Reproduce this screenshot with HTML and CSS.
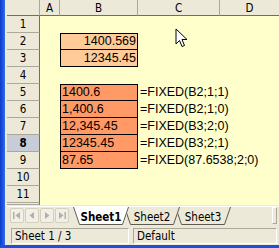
FILE: index.html
```html
<!DOCTYPE html>
<html lang="en">
<head>
    <meta charset="UTF-8">
    <title>FIXED function</title>
    <link rel="stylesheet" href="styles.css">
</head>
<body>
    <div class="window">
        <div class="frame-left"></div>
        <div class="app">
            <div class="sheet">
                <div class="corner"></div>
                <div class="colhead">A</div>
                <div class="colhead">B</div>
                <div class="colhead">C</div>
                <div class="colhead last">D</div>

                <div class="rowhead">1</div><div></div><div></div><div></div><div></div>
                <div class="rowhead">2</div><div></div><div class="cell peach first num">1400.569</div><div></div><div></div>
                <div class="rowhead">3</div><div></div><div class="cell peach num">12345.45</div><div></div><div></div>
                <div class="rowhead">4</div><div></div><div></div><div></div><div></div>
                <div class="rowhead">5</div><div></div><div class="cell orange first">1400.6</div><div class="formula">=FIXED(B2;1;1)</div><div></div>
                <div class="rowhead">6</div><div></div><div class="cell orange">1,400.6</div><div class="formula">=FIXED(B2;1;0)</div><div></div>
                <div class="rowhead">7</div><div></div><div class="cell orange">12,345.45</div><div class="formula">=FIXED(B3;2;0)</div><div></div>
                <div class="rowhead selected">8</div><div></div><div class="cell orange">12345.45</div><div class="formula">=FIXED(B3;2;1)</div><div></div>
                <div class="rowhead">9</div><div></div><div class="cell orange">87.65</div><div class="formula">=FIXED(87.6538;2;0)</div><div></div>
                <div class="rowhead">10</div><div></div><div></div><div></div><div></div>
                <div class="rowhead">11</div><div></div><div></div><div></div><div></div>
                <div class="rowhead"></div><div></div><div></div><div></div><div></div>

                <svg class="cursor" width="13" height="21" viewBox="0 0 13 21">
                    <path d="M1 1 L1 16 L4.5 12.5 L7 18.5 L9.5 17.5 L7 11.5 L12 11.5 Z" fill="#fff" stroke="#000" stroke-width="1" stroke-linejoin="miter"/>
                </svg>
            </div>

            <div class="tabbar">
                <div class="navs">
                    <span class="nav"><svg width="8" height="7" viewBox="0 0 8 7"><rect x="0" y="0" width="1.5" height="7" fill="#b3b0a3"/><path d="M7 0 L2.5 3.5 L7 7 Z" fill="#b3b0a3"/></svg></span>
                    <span class="nav"><svg width="8" height="7" viewBox="0 0 8 7"><path d="M6 0 L1.5 3.5 L6 7 Z" fill="#b3b0a3"/></svg></span>
                    <span class="nav"><svg width="8" height="7" viewBox="0 0 8 7"><path d="M2 0 L6.5 3.5 L2 7 Z" fill="#b3b0a3"/></svg></span>
                    <span class="nav"><svg width="8" height="7" viewBox="0 0 8 7"><path d="M1 0 L5.5 3.5 L1 7 Z" fill="#b3b0a3"/><rect x="6.5" y="0" width="1.5" height="7" fill="#b3b0a3"/></svg></span>
                </div>
                <div class="tabs">
                    <div class="tab active">
                        <svg class="tab-shape" width="56" height="18" viewBox="0 0 56 18"><path d="M0 0 L6 17.5 L50 17.5 L56 0 Z" fill="#fff"/><path d="M0.5 0 L6.5 17.5 L49.5 17.5 L55.5 0" fill="none" stroke="#5d5b52"/></svg>
                        <span>Sheet1</span>
                    </div>
                    <div class="tab second">
                        <svg class="tab-shape" width="56" height="18" viewBox="0 0 56 18"><path d="M0 0 L6 17.5 L50 17.5 L56 0 Z" fill="#ece9d8"/><path d="M0.5 0 L6.5 17.5 L49.5 17.5 L55.5 0" fill="none" stroke="#5d5b52"/></svg>
                        <span>Sheet2</span>
                    </div>
                    <div class="tab third">
                        <svg class="tab-shape" width="56" height="18" viewBox="0 0 56 18"><path d="M0 0 L6 17.5 L50 17.5 L56 0 Z" fill="#ece9d8"/><path d="M0.5 0 L6.5 17.5 L49.5 17.5 L55.5 0" fill="none" stroke="#5d5b52"/></svg>
                        <span>Sheet3</span>
                    </div>
                </div>
                <div class="splitter"></div>
            </div>

            <div class="statusbar">
                <div class="field pages">Sheet 1 / 3</div>
                <div class="field style">Default</div>
            </div>
        </div>
    </div>
    <div class="frame-bottom"></div>
</body>
</html>
```

FILE: styles.css
```css
body {
    margin: 0;
    width: 279px;
    height: 248px;
    overflow: hidden;
    background: #ece9d8;
    font-family: "DejaVu Sans Condensed", "DejaVu Sans", sans-serif;
}
.window {
    display: flex;
    height: 245px;
}
.frame-left {
    width: 5px;
    background: linear-gradient(90deg, #0a3cc8 0%, #1e56e0 60%, #3a6ee8 100%);
}
.app {
    flex: 1;
    display: flex;
    flex-direction: column;
    padding-left: 2px;
    min-width: 0;
}
.frame-bottom {
    height: 3px;
    background: #1d4fd8;
}
.sheet {
    position: relative;
    display: grid;
    grid-template-columns: 33px 20px 78px 82px 1fr;
    grid-template-rows: 16px repeat(11, 17px) 2px;
    background: #ffffcc;
    overflow: hidden;
}
.corner,
.colhead,
.rowhead {
    background: #ece9d8;
    box-sizing: border-box;
    font-size: 11.5px;
    color: #000;
    display: flex;
    align-items: center;
    justify-content: center;
}
.corner {
    border-right: 1px solid #aca899;
    border-bottom: 1px solid #716f64;
}
.colhead {
    border-right: 1px solid #aca899;
    border-bottom: 1px solid #716f64;
    padding-top: 1px;
}
.colhead.last {
    border-right: none;
}
.rowhead {
    border-right: 1px solid #716f64;
    border-bottom: 1px solid #aca899;
}
.rowhead.selected {
    background: #c7cdd8;
    font-weight: bold;
}
.cell {
    box-sizing: border-box;
    border: 1px solid #000;
    border-top: none;
    font-family: "Liberation Sans", Arial, sans-serif;
    font-size: 12.5px;
    line-height: 16px;
    padding: 0 1px;
    white-space: nowrap;
    overflow: hidden;
}
.cell.first {
    border-top: 1px solid #000;
    line-height: 15px;
}
.cell.num {
    text-align: right;
}
.peach {
    background: #ffcc99;
}
.orange {
    background: #ff9966;
}
.formula {
    font-family: "Liberation Sans", Arial, sans-serif;
    font-size: 12.5px;
    line-height: 17px;
    padding-left: 2px;
    white-space: nowrap;
}
.cursor {
    position: absolute;
    left: 168px;
    top: 28px;
}
.tabbar {
    height: 18px;
    margin-top: 1px;
    display: flex;
    align-items: flex-start;
    border-top: 1px solid #fff;
}
.navs {
    display: flex;
    gap: 1px;
    padding: 1px 0 0 3px;
}
.nav {
    width: 14px;
    height: 15px;
    box-sizing: border-box;
    border: 1px solid #d4d0c0;
    border-radius: 2px;
    background: #f2f0e6;
    display: flex;
    align-items: center;
    justify-content: center;
}
.tabs {
    display: flex;
    margin-left: 4px;
}
.tab {
    position: relative;
    width: 56px;
    height: 18px;
    font-size: 11.5px;
    display: flex;
    align-items: center;
    justify-content: center;
}
.tab + .tab {
    margin-left: -5px;
}
.tab-shape {
    position: absolute;
    left: 0;
    top: 0;
}
.tab span {
    position: relative;
    padding-top: 1px;
}
.tab.active {
    z-index: 3;
    font-weight: bold;
}
.tab.second {
    z-index: 2;
}
.tab.third {
    z-index: 1;
}
.splitter {
    margin-left: auto;
    margin-right: 2px;
    width: 5px;
    height: 17px;
    box-sizing: border-box;
    border: 1px solid #aca899;
    border-left-color: #fff;
    border-top-color: #fff;
    background: #ece9d8;
}
.statusbar {
    display: flex;
    gap: 4px;
    padding: 3px 2px 0 4px;
}
.field {
    height: 16px;
    box-sizing: border-box;
    border: 1px solid;
    border-color: #aca899 #fff #fff #aca899;
    font-size: 11.5px;
    line-height: 14px;
    padding-left: 3px;
}
.pages {
    width: 118px;
}
.style {
    flex: 1;
}
```
